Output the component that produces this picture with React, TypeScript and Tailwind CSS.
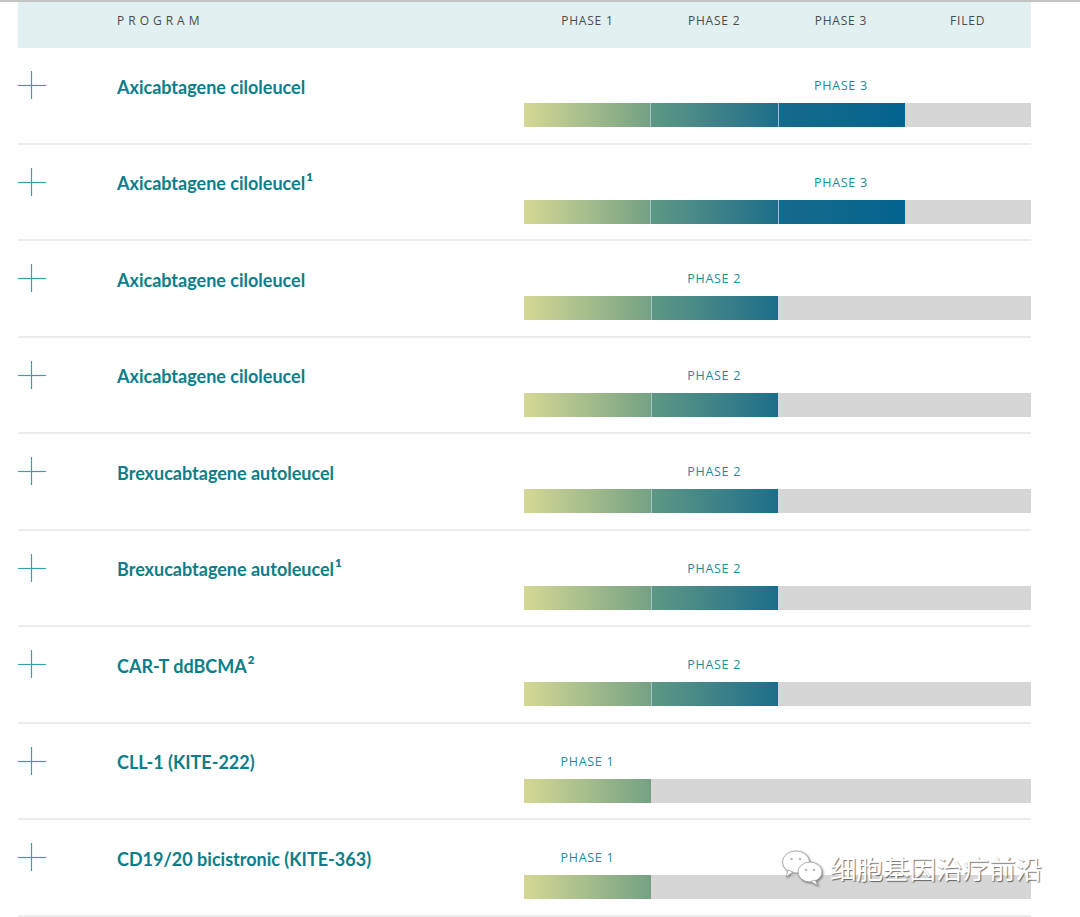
import React from 'react';

type Program = {
    name: string;
    sup?: string;
    phase: 1 | 2 | 3;
};

const programs: Program[] = [
    { name: 'Axicabtagene ciloleucel', phase: 3 },
    { name: 'Axicabtagene ciloleucel', sup: '1', phase: 3 },
    { name: 'Axicabtagene ciloleucel', phase: 2 },
    { name: 'Axicabtagene ciloleucel', phase: 2 },
    { name: 'Brexucabtagene autoleucel', phase: 2 },
    { name: 'Brexucabtagene autoleucel', sup: '1', phase: 2 },
    { name: 'CAR-T ddBCMA', sup: '2', phase: 2 },
    { name: 'CLL-1 (KITE-222)', phase: 1 },
    { name: 'CD19/20 bicistronic (KITE-363)', phase: 1 },
];

const segmentClasses = [
    'bg-gradient-to-r from-[#d5d894] to-[#74a183]',
    'bg-gradient-to-r from-[#5e9884] to-[#1b6d8a]',
    'bg-gradient-to-r from-[#156a8c] to-[#03638f]',
];

const PlusIcon: React.FC = () => (
    <svg width="28" height="28" viewBox="0 0 28 28" className="shrink-0">
        <line x1="0" y1="14.5" x2="28" y2="14.5" stroke="#3a9ea8" strokeWidth="1.2" />
        <line x1="13.5" y1="0" x2="13.5" y2="28" stroke="#3a9ea8" strokeWidth="1.2" />
    </svg>
);

const PhaseBar: React.FC<{ phase: number }> = ({ phase }) => (
    <div className="flex h-[24px] w-full bg-[#d6d6d6]">
        {[0, 1, 2, 3].map((i) => (
            <div
                key={i}
                className={`h-full flex-1 ${i < phase ? segmentClasses[i] : ''} ${
                    i > 0 && i < phase ? 'border-l border-white/60' : ''
                }`}
            />
        ))}
    </div>
);

const ProgramRow: React.FC<{ program: Program }> = ({ program }) => (
    <div className="flex h-[96.5px] border-b-2 border-[#ececec]">
        <div className="flex w-[506px] items-start pt-[23px]">
            <PlusIcon />
            <div className="ml-[71px] mt-[2px] flex h-[28px] items-center font-['Lato',sans-serif] text-[18px] font-bold text-[#0b7e8a]">
                <span>
                    {program.name}
                    {program.sup && (
                        <sup className="ml-[1px] top-[-0.75em] text-[11.5px] font-extrabold">{program.sup}</sup>
                    )}
                </span>
            </div>
        </div>
        <div className="flex w-[507px] flex-col pt-[30px]">
            <div className="grid h-[16px] grid-cols-4">
                <div
                    className={`text-center font-['Open_Sans',sans-serif] text-[12.5px] leading-[16px] tracking-[0.7px] text-[#1a8c9a] ${
                        program.phase === 1 ? 'col-start-1' : program.phase === 2 ? 'col-start-2' : 'col-start-3'
                    }`}
                >
                    PHASE {program.phase}
                </div>
            </div>
            <div className="mt-[9px]">
                <PhaseBar phase={program.phase} />
            </div>
        </div>
    </div>
);

const WeChatMark: React.FC = () => (
    <svg width="44" height="38" viewBox="0 0 44 38" className="drop-shadow-[1px_1px_1px_rgba(0,0,0,0.45)]">
        <ellipse cx="15" cy="13" rx="13.5" ry="11" fill="#fff" stroke="#9a9a9a" strokeWidth="0.8" />
        <path d="M7 21 L5 28 L12 23 Z" fill="#fff" stroke="#9a9a9a" strokeWidth="0.8" />
        <circle cx="10.5" cy="10" r="1.3" fill="#bbb" />
        <circle cx="19" cy="10" r="1.3" fill="#bbb" />
        <ellipse cx="29" cy="23" rx="12" ry="10" fill="#fff" stroke="#9a9a9a" strokeWidth="0.8" />
        <path d="M34 31 L37 36.5 L29.5 32.5 Z" fill="#fff" stroke="#9a9a9a" strokeWidth="0.8" />
        <circle cx="25" cy="21" r="1.3" fill="#bbb" />
        <circle cx="33" cy="21" r="1.3" fill="#bbb" />
    </svg>
);

export default function App() {
    return (
        <div className="relative h-[917px] w-[1080px] overflow-hidden bg-white">
            <div className="h-[2px] w-full bg-[#c4c4c4]" />
            <div className="px-[18px]">
                <div className="w-[1013px]">
                    <div className="flex h-[46px] items-start bg-[#e2f0f1] pt-[10px]">
                        <div className="w-[506px] pl-[99px] font-['Open_Sans',sans-serif] text-[12px] tracking-[4px] text-[#4a4a4a]">
                            PROGRAM
                        </div>
                        <div className="grid w-[507px] grid-cols-4 font-['Open_Sans',sans-serif] text-[12px] tracking-[0.8px] text-[#4a4a4a]">
                            <div className="text-center">PHASE 1</div>
                            <div className="text-center">PHASE 2</div>
                            <div className="text-center">PHASE 3</div>
                            <div className="text-center">FILED</div>
                        </div>
                    </div>
                    {programs.map((p, i) => (
                        <ProgramRow key={i} program={p} />
                    ))}
                </div>
            </div>

            {/* watermark */}
            <div className="absolute left-[781px] top-[849px] flex items-center gap-[5px]">
                <WeChatMark />
                <span className="font-['Noto_Sans_CJK_SC',sans-serif] text-[26.5px] leading-none text-white [text-shadow:1px_1px_1px_rgba(0,0,0,0.55)]">
                    细胞基因治疗前沿
                </span>
            </div>
        </div>
    );
}
